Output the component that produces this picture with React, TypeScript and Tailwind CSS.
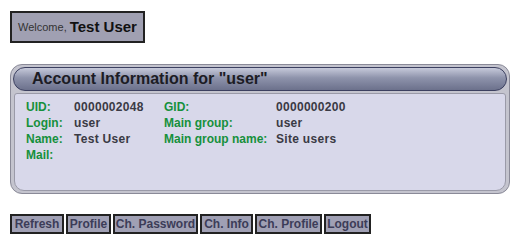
export default function App() {
  const rows = [
    ['UID:', '0000002048', 'GID:', '0000000200'],
    ['Login:', 'user', 'Main group:', 'user'],
    ['Name:', 'Test User', 'Main group name:', 'Site users'],
    ['Mail:', '', '', ''],
  ]
  const buttons: [string, string][] = [
    ['Refresh', 'w-[54px]'],
    ['Profile', 'w-[45px]'],
    ['Ch. Password', 'w-[85px]'],
    ['Ch. Info', 'w-[53px]'],
    ['Ch. Profile', 'w-[67px]'],
    ['Logout', 'w-[47px]'],
  ]

  return (
    <div className="w-[520px] h-[245px] bg-white pl-[10px] pt-[11px] font-['Liberation_Sans',Arial,sans-serif]">
      {/* Welcome box */}
      <div className="inline-flex items-center h-[32px] px-[6px] border-2 border-[#222] bg-[#a0a0b2]">
        <span className="text-[11px] text-[#333]">Welcome,</span>
        <span className="ml-[3px] text-[15px] font-bold text-[#111]">Test User</span>
      </div>

      {/* Account panel */}
      <div className="mt-[21px] w-[500px] h-[130px] rounded-[12px] border border-[#8a8a98] bg-[#c4c4ce] p-[2px] flex flex-col">
        <div className="h-[24px] rounded-[12px] border border-[#3c4060] bg-[linear-gradient(#c6c9da,#8e93ab_45%,#6c718c)] flex items-center pl-[18px]">
          <span className="text-[16px] font-bold text-[#1c1c24]">Account Information for "user"</span>
        </div>
        <div className="mt-[2px] mx-[1px] flex-1 rounded-t-[3px] rounded-b-[10px] border border-[#9a9aa8] bg-[#d8d8ea] pl-[11px] pt-[5px] text-[12px] font-bold leading-[16px]">
          {rows.map((r, i) => (
            <div key={i} className="flex">
              <span className="w-[48px] text-[#16903c]">{r[0]}</span>
              <span className="w-[90px] text-[#3a3a44] tracking-[0.3px]">{r[1]}</span>
              <span className="w-[112px] text-[#16903c]">{r[2]}</span>
              <span className="text-[#3a3a44] tracking-[0.3px]">{r[3]}</span>
            </div>
          ))}
        </div>
      </div>

      {/* Buttons */}
      <div className="mt-[20px] flex gap-[2px]">
        {buttons.map(([b, w]) => (
          <button
            key={b}
            className={`${w} h-[20px] border-2 border-[#222] bg-[#a0a0b4] text-[12px] font-bold text-[#3c3c58] leading-none text-center`}
          >
            {b}
          </button>
        ))}
      </div>
    </div>
  )
}
